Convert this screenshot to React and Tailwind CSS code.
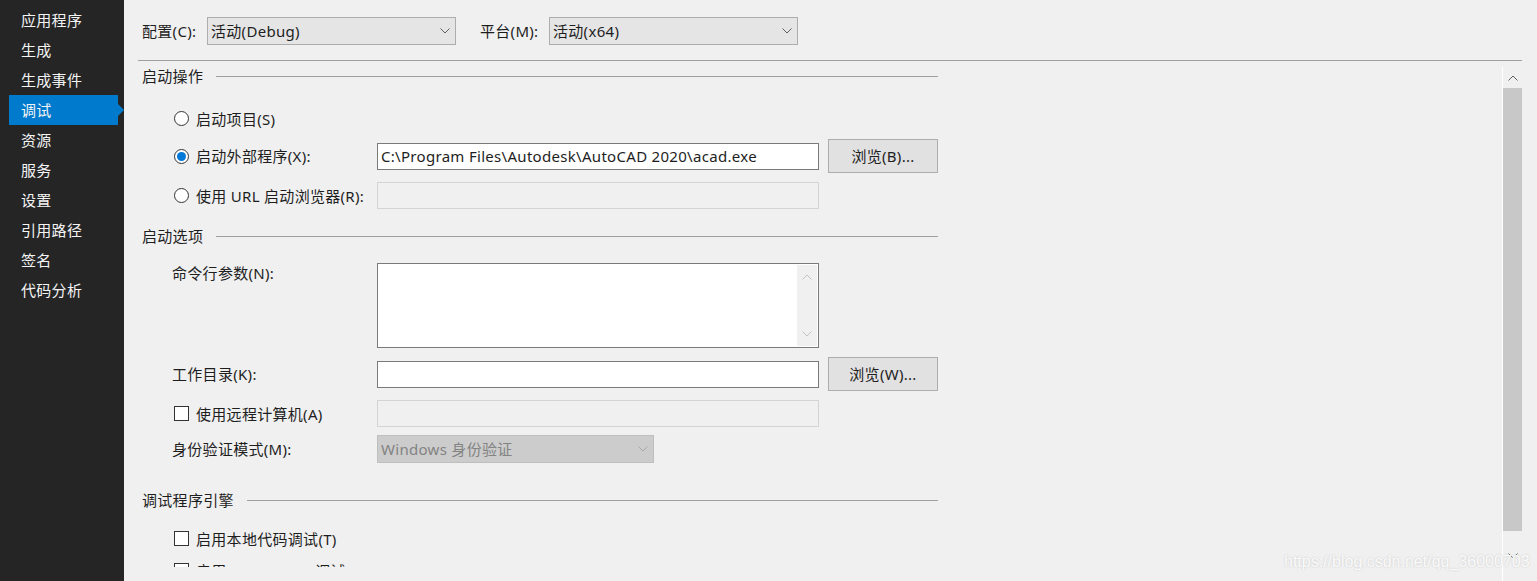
import React from 'react';

const FONT = { fontFamily: '"Noto Sans", "Noto Sans CJK SC", sans-serif' };

const navItems = ['应用程序', '生成', '生成事件', '调试', '资源', '服务', '设置', '引用路径', '签名', '代码分析'];

function Chevron({ down = true, className = '' }) {
  return (
    <svg width="10" height="6" viewBox="0 0 10 6" className={className}>
      <polyline
        points={down ? '0.5,0.5 5,5 9.5,0.5' : '0.5,5.5 5,1 9.5,5.5'}
        fill="none"
        stroke="currentColor"
        strokeWidth="1"
      />
    </svg>
  );
}

function Select({ value, className = '', disabled }) {
  return (
    <div
      className={`flex items-center justify-between border pl-[3px] pr-[5px] ${
        disabled ? 'bg-[#cccccc] border-[#bfbfbf] text-[#838383]' : 'bg-[#e5e5e5] border-[#adadad] text-[#1e1e1e]'
      } ${className}`}
    >
      <span className="leading-[20px]">{value}</span>
      <Chevron className={disabled ? 'text-[#a8a8a8]' : 'text-[#606060]'} />
    </div>
  );
}

function SectionHeader({ title }) {
  return (
    <div className="flex items-center h-[20px] gap-[13px] pl-[4px] w-[800px]">
      <span className="leading-[20px] whitespace-nowrap">{title}</span>
      <div className="flex-1 h-px bg-[#a0a0a0]" />
    </div>
  );
}

function Radio({ checked }) {
  return (
    <div className="w-[15px] h-[15px] rounded-full border border-[#333333] bg-white flex items-center justify-center ml-[2px] mr-[7px] shrink-0">
      {checked && <div className="w-[9px] h-[9px] rounded-full bg-[#0078d7]" />}
    </div>
  );
}

function Checkbox() {
  return <div className="w-[15px] h-[15px] border border-[#333333] bg-white ml-[2px] mr-[7px] shrink-0" />;
}

function TextBox({ value, disabled }) {
  return (
    <div
      className={`w-[442px] h-[27px] border flex items-center pl-[3px] ${
        disabled ? 'bg-[#f0f0f0] border-[#d4d4d4]' : 'bg-white border-[#7a7a7a]'
      }`}
    >
      <span className="leading-[20px] whitespace-nowrap">{value}</span>
    </div>
  );
}

function Button({ children }) {
  return (
    <div className="ml-[9px] w-[110px] h-[34px] bg-[#e1e1e1] border border-[#adadad] flex items-center justify-center">
      <span className="leading-[20px]">{children}</span>
    </div>
  );
}

export default function App() {
  return (
    <div
      className="w-[1537px] h-[581px] overflow-hidden flex bg-[#f0f0f0] text-[15px] tracking-[0.3px] text-[#1e1e1e] relative"
      style={FONT}
    >
      {/* sidebar */}
      <div className="w-[124px] h-full bg-[#252526] pt-[5px] shrink-0">
        {navItems.map((item) => {
          const active = item === '调试';
          return (
            <div key={item} className="flex items-center h-[30px]">
              <div
                className={`ml-[9px] w-[109px] h-[30px] pl-[12px] flex items-center text-[#f4f4f4] ${
                  active ? 'bg-[#007acc]' : ''
                }`}
              >
                {item}
              </div>
              {active && (
                <div className="w-0 h-0 border-y-[6px] border-y-transparent border-l-[6px] border-l-[#007acc]" />
              )}
            </div>
          );
        })}
      </div>

      {/* main */}
      <div className="flex-1 flex flex-col ml-[14px] mr-[15px]">
        <div className="h-[61px] border-b border-[#a0a0a0] pt-[17px] pl-[4px] flex items-start shrink-0">
          <div className="h-[28px] w-[65px] flex items-center leading-[20px]">配置(C):</div>
          <Select value="活动(Debug)" className="w-[249px] h-[28px]" />
          <div className="h-[28px] w-[69px] ml-[24px] flex items-center leading-[20px]">平台(M):</div>
          <Select value="活动(x64)" className="w-[249px] h-[28px]" />
        </div>

        <div className="flex flex-1 min-h-0">
          <div className="flex-1 h-[506px] overflow-hidden">
            <div className="mt-[5px]">
              <SectionHeader title="启动操作" />
            </div>

            <div className="mt-[19px] h-[27px] flex items-center pl-[34px]">
              <Radio />
              <span className="leading-[20px]">启动项目(S)</span>
            </div>

            <div className="mt-[7px] h-[34px] flex items-center pl-[34px]">
              <Radio checked />
              <span className="leading-[20px] w-[181px]">启动外部程序(X):</span>
              <TextBox value="C:\Program Files\Autodesk\AutoCAD 2020\acad.exe" />
              <Button>浏览(B)...</Button>
            </div>

            <div className="mt-[9px] h-[27px] flex items-center pl-[34px]">
              <Radio />
              <span className="leading-[20px] w-[181px]">使用 URL 启动浏览器(R):</span>
              <TextBox disabled />
            </div>

            <div className="mt-[17px]">
              <SectionHeader title="启动选项" />
            </div>

            <div className="mt-[17px] h-[85px] flex items-start pl-[34px]">
              <span className="leading-[20px] w-[205px]">命令行参数(N):</span>
              <div className="w-[442px] h-[85px] bg-white border border-[#7a7a7a] flex justify-end p-px">
                <div className="w-[20px] h-full bg-[#f0f0f0] flex flex-col items-center justify-between py-[9px] text-[#c2c2c2]">
                  <Chevron down={false} />
                  <Chevron />
                </div>
              </div>
            </div>

            <div className="mt-[9px] h-[34px] flex items-center pl-[34px]">
              <span className="leading-[20px] w-[205px]">工作目录(K):</span>
              <TextBox value="" />
              <Button>浏览(W)...</Button>
            </div>

            <div className="mt-[9px] h-[27px] flex items-center pl-[34px]">
              <Checkbox />
              <span className="leading-[20px] w-[181px]">使用远程计算机(A)</span>
              <TextBox disabled />
            </div>

            <div className="mt-[8px] h-[28px] flex items-center pl-[34px]">
              <span className="leading-[20px] w-[205px]">身份验证模式(M):</span>
              <Select value="Windows 身份验证" disabled className="w-[277px] h-[28px]" />
            </div>

            <div className="mt-[27px]">
              <SectionHeader title="调试程序引擎" />
            </div>

            <div className="mt-[15px] h-[27px] flex items-center pl-[34px]">
              <Checkbox />
              <span className="leading-[20px]">启用本地代码调试(T)</span>
            </div>

            <div className="mt-[5px] h-[27px] flex items-center pl-[34px]">
              <Checkbox />
              <span className="leading-[20px]">启用 SQL Server 调试(L)</span>
            </div>
          </div>

          {/* scrollbar */}
          <div className="w-[20px] mt-[6px] border-l border-white flex flex-col shrink-0">
            <div className="h-[21px] flex items-center justify-center text-[#606060]">
              <Chevron down={false} />
            </div>
            <div className="h-[443px] bg-[#c8c8c8]" />
            <div className="h-[14px]" />
            <div className="h-[21px] flex items-center justify-center text-[#606060]">
              <Chevron />
            </div>
          </div>
        </div>
      </div>

      {/* watermark */}
      <div
        className="absolute left-[1284px] top-[552px] text-[16px] tracking-normal leading-[20px] text-[#fafafa] [text-shadow:0_0_2px_#c4c4c4]"
        style={{ fontFamily: '"Liberation Sans", sans-serif' }}
      >
        https://blog.csdn.net/qq_36000703
      </div>
    </div>
  );
}
